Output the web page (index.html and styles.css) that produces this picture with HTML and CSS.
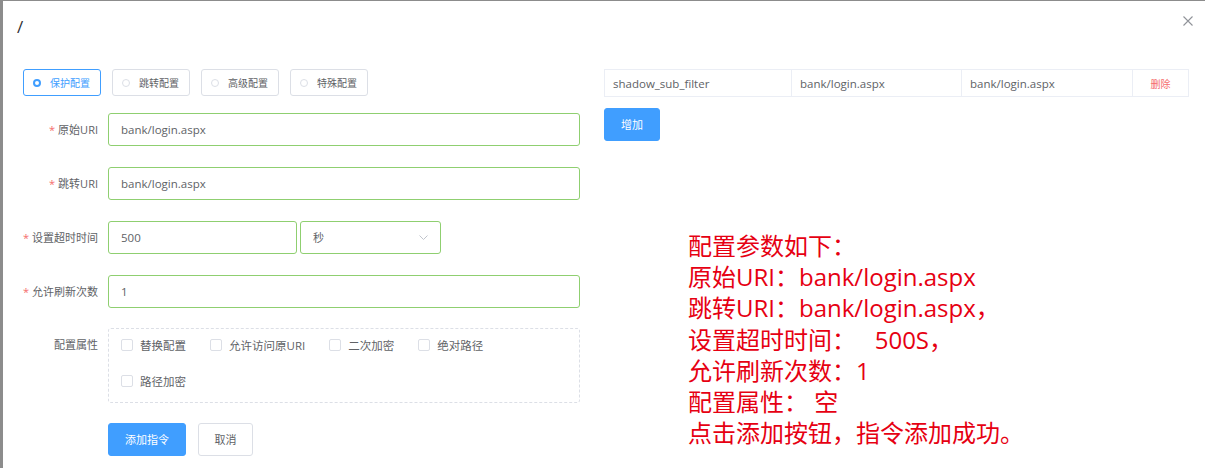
FILE: index.html
```html
<!DOCTYPE html>
<html lang="zh-CN">
<head>
<meta charset="utf-8">
<title>配置</title>
<link rel="stylesheet" href="styles.css">
</head>
<body>
<div class="frame">
  <div class="header">
    <span class="title">/</span>
    <span class="close"><svg width="10" height="10" viewBox="0 0 10 10"><path d="M0.5 0.5 L9.5 9.5 M9.5 0.5 L0.5 9.5" stroke="#909399" stroke-width="1.1" fill="none"/></svg></span>
  </div>
  <div class="body">
    <div class="left">
      <div class="radios">
        <div class="radio active"><span class="dot"></span>保护配置</div>
        <div class="radio"><span class="dot"></span>跳转配置</div>
        <div class="radio"><span class="dot"></span>高级配置</div>
        <div class="radio"><span class="dot"></span>特殊配置</div>
      </div>
      <div class="row first">
        <label class="label"><span class="req">*</span>原始URI</label>
        <div class="input wide">bank/login.aspx</div>
      </div>
      <div class="row">
        <label class="label"><span class="req">*</span>跳转URI</label>
        <div class="input wide">bank/login.aspx</div>
      </div>
      <div class="row">
        <label class="label"><span class="req">*</span>设置超时时间</label>
        <div class="input short">500</div>
        <div class="input select">秒<svg class="chev" width="9" height="5" viewBox="0 0 9 5"><path d="M0.5 0.5 L4.5 4.5 L8.5 0.5" stroke="#c0c4cc" stroke-width="1" fill="none"/></svg></div>
      </div>
      <div class="row">
        <label class="label"><span class="req">*</span>允许刷新次数</label>
        <div class="input wide">1</div>
      </div>
      <div class="row attr">
        <label class="label">配置属性</label>
        <div class="checks">
          <span class="check"><span class="box"></span>替换配置</span>
          <span class="check"><span class="box"></span>允许访问原URI</span>
          <span class="check"><span class="box"></span>二次加密</span>
          <span class="check"><span class="box"></span>绝对路径</span>
          <span class="check"><span class="box"></span>路径加密</span>
        </div>
      </div>
      <div class="actions">
        <button class="btn primary">添加指令</button>
        <button class="btn plain">取消</button>
      </div>
    </div>
    <div class="right">
      <table class="table">
        <tr>
          <td class="c1">shadow_sub_filter</td>
          <td class="c2">bank/login.aspx</td>
          <td class="c3">bank/login.aspx</td>
          <td class="c4"><span class="del">删除</span></td>
        </tr>
      </table>
      <button class="btn primary add">增加</button>
      <div class="note">
        <div>配置参数如下：</div>
        <div>原始URI：bank/login.aspx</div>
        <div>跳转URI：bank/login.aspx，</div>
        <div>设置超时时间：&nbsp;&nbsp;&nbsp;500S，</div>
        <div>允许刷新次数：1</div>
        <div>配置属性： 空</div>
        <div>点击添加按钮，指令添加成功。</div>
      </div>
    </div>
  </div>
</div>
</body>
</html>
```
FILE: styles.css
```css
* { box-sizing: border-box; }
html, body { margin: 0; padding: 0; background: #fff; }
body {
  font-family: "Open Sans", "Noto Sans CJK SC", sans-serif;
  color: #606266;
  width: 1219px;
  height: 468px;
  overflow: hidden;
}
.frame {
  width: 1205px;
  height: 468px;
  border-left: 3px solid #8c8c8c;
  border-top: 1px solid #8c8c8c;
}
.header {
  display: flex;
  justify-content: space-between;
  align-items: flex-start;
  padding: 14px 12px 0 14px;
  height: 38px;
}
.title {
  font-size: 17px;
  line-height: 24px;
  color: #303133;
}
.close {
  display: block;
  width: 10px;
  height: 10px;
  margin-top: 1px;
}
.close svg { display: block; }
.body {
  display: flex;
  padding: 30px 0 0 20px;
}
.left { width: 557px; flex-shrink: 0; }
.right { width: 584px; margin-left: 24px; flex-shrink: 0; }

.radios { display: flex; gap: 11px; }
.radio {
  width: 78px;
  height: 27px;
  border: 1px solid #dcdfe6;
  border-radius: 3px;
  display: flex;
  align-items: center;
  padding-left: 9px;
  font-size: 10px;
  color: #606266;
  font-family: "Noto Sans CJK SC", sans-serif;
}
.dot {
  width: 8px;
  height: 8px;
  border-radius: 50%;
  border: 1px solid #dcdfe6;
  margin-right: 9px;
  background: #fff;
}
.radio.active { border-color: #409eff; color: #409eff; }
.radio.active .dot {
  border: 2.5px solid #409eff;
  background: #fff;
}

.row {
  display: flex;
  align-items: flex-start;
  margin-top: 21px;
}
.row.first { margin-top: 17px; }
.row.attr { margin-top: 20px; }
.label {
  flex: 0 0 85px;
  width: 85px;
  padding-right: 10px;
  text-align: right;
  font-size: 11px;
  line-height: 33px;
  white-space: nowrap;
  color: #606266;
  font-family: "Open Sans", "Noto Sans CJK SC", sans-serif;
}
.req { color: #f56c6c; margin-right: 3px; }
.input {
  flex-shrink: 0;
  height: 33px;
  border: 1px solid #8fcf70;
  border-radius: 3px;
  padding: 0 12px;
  font-size: 11.5px;
  line-height: 31px;
  color: #606266;
}
.input.wide { width: 472px; }
.input.short { width: 189px; }
.input.select {
  width: 141px;
  margin-left: 3px;
  display: flex;
  align-items: center;
  justify-content: space-between;
  font-family: "Noto Sans CJK SC", sans-serif;
  font-size: 11px;
}
.chev { display: block; }

.checks {
  flex-shrink: 0;
  width: 472px;
  border: 1px dashed #dcdfe6;
  border-radius: 3px;
  padding: 0 12px 5px 12px;
  display: flex;
  flex-wrap: wrap;
  row-gap: 4px;
}
.check {
  display: flex;
  align-items: center;
  height: 32px;
  margin-right: 24px;
  font-size: 11.5px;
  color: #606266;
  white-space: nowrap;
}
.box {
  width: 12px;
  height: 12px;
  border: 1px solid #dcdfe6;
  border-radius: 2px;
  margin-right: 7px;
  background: #fff;
}

.actions {
  display: flex;
  gap: 12px;
  margin: 20px 0 0 85px;
}
.btn {
  height: 33px;
  border-radius: 3px;
  font-size: 11px;
  font-family: "Noto Sans CJK SC", sans-serif;
  padding: 0;
  cursor: pointer;
  line-height: 31px;
  text-align: center;
}
.btn.primary {
  background: #409eff;
  border: 1px solid #409eff;
  color: #fff;
  width: 78px;
}
.btn.plain {
  background: #fff;
  border: 1px solid #dcdfe6;
  color: #606266;
  width: 55px;
}

.table {
  border-collapse: collapse;
  width: 584px;
  height: 27px;
  table-layout: fixed;
}
.table td {
  border: 1px solid #ebeef5;
  padding: 0 8px;
  font-size: 11.5px;
  color: #606266;
  height: 27px;
  white-space: nowrap;
}
.table .c1 { width: 187px; }
.table .c2 { width: 170px; }
.table .c3 { width: 171px; }
.table .c4 { width: 56px; text-align: center; }
.del { color: #f56c6c; font-family: "Noto Sans CJK SC", sans-serif; font-size: 10px; }
.btn.add { width: 56px; margin-top: 11px; display: block; }

.note {
  margin-top: 89px;
  padding-left: 84px;
  font-size: 24px;
  line-height: 31.2px;
  color: #e60012;
  font-family: "Open Sans", "Noto Sans CJK SC", sans-serif;
  white-space: nowrap;
}
```
